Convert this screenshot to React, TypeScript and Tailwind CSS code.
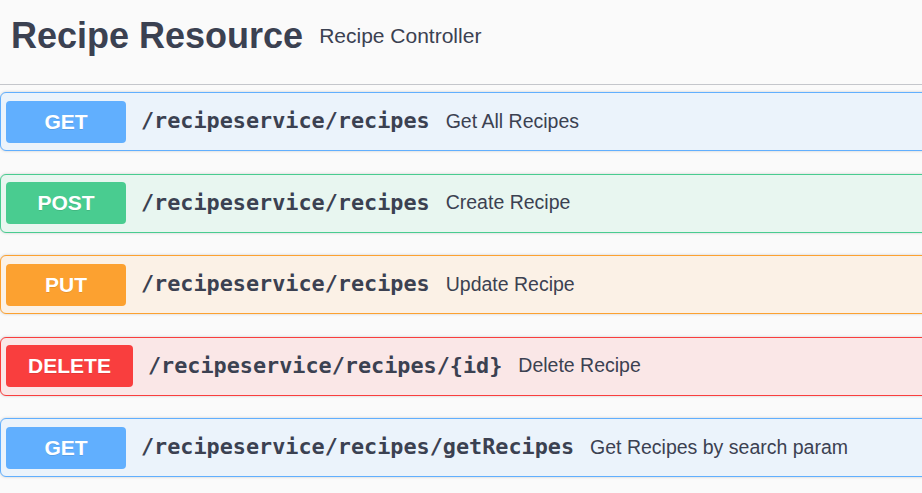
const ops = [
  {
    method: "GET",
    path: "/recipeservice/recipes",
    desc: "Get All Recipes",
    row: "bg-[#ebf3fb] border-[#61affe]",
    badge: "bg-[#61affe] w-[120px]",
  },
  {
    method: "POST",
    path: "/recipeservice/recipes",
    desc: "Create Recipe",
    row: "bg-[#e8f6f0] border-[#49cc90]",
    badge: "bg-[#49cc90] w-[120px]",
  },
  {
    method: "PUT",
    path: "/recipeservice/recipes",
    desc: "Update Recipe",
    row: "bg-[#fbf1e6] border-[#fca130]",
    badge: "bg-[#fca130] w-[120px]",
  },
  {
    method: "DELETE",
    path: "/recipeservice/recipes/{id}",
    desc: "Delete Recipe",
    row: "bg-[#fae7e7] border-[#f93e3e]",
    badge: "bg-[#f93e3e] w-[127px]",
  },
  {
    method: "GET",
    path: "/recipeservice/recipes/getRecipes",
    desc: "Get Recipes by search param",
    row: "bg-[#ebf3fb] border-[#61affe]",
    badge: "bg-[#61affe] w-[120px]",
  },
];

export default function App() {
  return (
    <div className="w-full min-h-screen overflow-hidden bg-[#fafafa] text-[#3b4151] font-['Liberation_Sans',Arial,sans-serif]">
      <div className="w-[960px]">
        {/* tag header */}
        <div className="h-[85px] flex items-center pl-[11px] pb-[13px] border-b border-[#c4c6cb]">
          <h4 className="text-[36px] font-bold leading-none">Recipe Resource</h4>
          <small className="ml-[16px] text-[21px] leading-none">Recipe Controller</small>
        </div>

        <div className="pt-[7px]">
          {ops.map((op, i) => (
            <div
              key={i}
              className={`h-[59px] mb-[22.5px] flex items-center px-[5px] border rounded-[6px] shadow-[0_0_3px_rgba(0,0,0,0.19)] ${op.row}`}
            >
              <span
                className={`h-[42px] shrink-0 flex items-center justify-center rounded-[4px] text-white text-[21px] font-bold [text-shadow:0_1px_0_rgba(0,0,0,0.1)] ${op.badge}`}
              >
                {op.method}
              </span>
              <span className="ml-[15px] text-[21.8px] font-bold font-['DejaVu_Sans_Mono',monospace] text-[#3b4151]">
                {op.path}
              </span>
              <span className="ml-[16px] text-[19.5px] text-[#3b4151]">{op.desc}</span>
            </div>
          ))}
        </div>
      </div>
    </div>
  );
}
